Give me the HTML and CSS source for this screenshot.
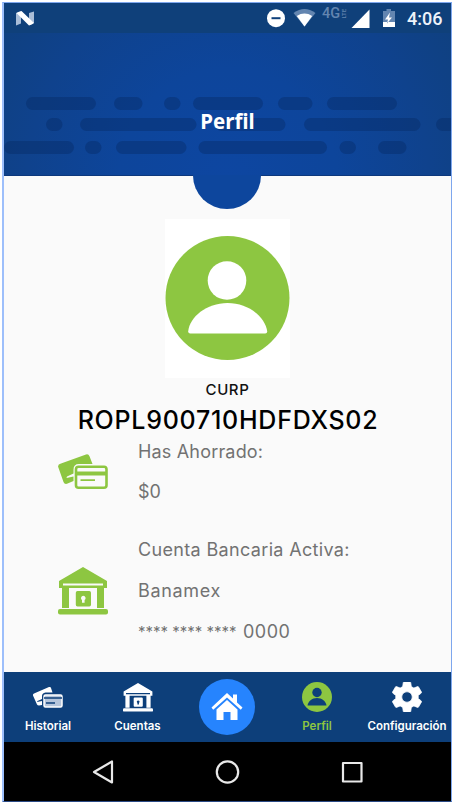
FILE: index.html
```
<!DOCTYPE html>
<html lang="es">
<head>
<meta charset="utf-8">
<title>Perfil</title>
<link rel="stylesheet" href="styles.css">
</head>
<body>
<svg class="symbols" aria-hidden="true">
  <symbol id="cards" viewBox="0 0 50 36">
    <path fill="currentColor" d="M3 9.500 28 .5q2.500-.8 3.500 1.700L34.500 10H21q-5.500 0-5.500 5.500v4L9 22.500l-.5 1.500 7-1.500V27L9 29.800q-2.500.7-3.500-1.800L.2 13q-.7-2.500 2.800-3.500Z"/>
    <rect x="18" y="12.700" width="30.500" height="21" rx="2.500" fill="none" stroke="currentColor" stroke-width="2.600"/>
    <path fill="currentColor" d="M18 17.500h31v4H18zM22.500 25.200H37v1.800H22.500z"/>
  </symbol>
  <symbol id="bank" viewBox="0 0 50 48">
    <path fill="currentColor" fill-rule="evenodd" d="M25 0 49 14v7H1v-7ZM5 16.500v2h40v-2Z"/>
    <path fill="currentColor" d="M4 20h7v21H4zM39 20h7v21h-7z"/>
    <rect y="42" width="50" height="5.500" rx="2" fill="currentColor"/>
    <path fill="currentColor" fill-rule="evenodd" d="M19.500 24h11.800q1.700 0 1.700 1.700v12.100q0 1.700-1.700 1.700H19.500q-1.700 0-1.700-1.700V25.700q0-1.700 1.700-1.700Zm5.800 4.800a2.300 2.300 0 0 0-1.300 4.200v2.800h2.600V33a2.300 2.300 0 0 0-1.300-4.200Z"/>
  </symbol>
</svg>
<div class="phone">
  <header class="header">
    <svg class="pattern" viewBox="4 3 447 173" aria-hidden="true">
      <g>
        <rect x="26" y="97" width="70" height="13" rx="6.500"/><rect x="114" y="97" width="28.500" height="13" rx="6.500"/><rect x="164" y="97" width="16.500" height="13" rx="6.500"/><rect x="193" y="97" width="70" height="13" rx="6.500"/><rect x="278" y="97" width="34.500" height="13" rx="6.500"/><rect x="327" y="97" width="70" height="13" rx="6.500"/>
        <rect x="46" y="118" width="16.500" height="13" rx="6.500"/><rect x="80" y="118" width="116.500" height="13" rx="6.500"/><rect x="215" y="118" width="70.500" height="13" rx="6.500"/><rect x="304" y="118" width="116.500" height="13" rx="6.500"/><rect x="436" y="118" width="30" height="13" rx="6.500"/>
        <rect x="4" y="141" width="70" height="13" rx="6.500"/><rect x="85" y="141" width="16.500" height="13" rx="6.500"/><rect x="116" y="141" width="70.500" height="13" rx="6.500"/><rect x="198.500" y="141" width="128.500" height="13" rx="6.500"/><rect x="339.500" y="141" width="16.500" height="13" rx="6.500"/><rect x="378" y="141" width="28.500" height="13" rx="6.500"/>
      </g>
    </svg>
    <div class="status">
      <svg class="status-n" viewBox="0 0 19 15"><path fill="#a9bdd8" d="M0 2l5-1.500v12L0 14.500zM13 2l5-1.500V12l-5 2z"/><path fill="#fff" d="M.5 2Q3 .5 5.500 0L18 12q-2 1.500-5 2.500Z"/></svg>
      <svg class="status-icons" viewBox="264 6 134 25">
        <circle cx="276" cy="18.200" r="9" fill="#fff"/><path d="M271.500 18.200h9" stroke="#0f407b" stroke-width="2"/>
        <path fill="#6385b0" d="M293.500 13q11-8 22 0L304.500 26.500Z"/><path fill="#fff" d="M296.800 16q7.700-4.800 15.400 0L304.500 26.500Z"/>
        <text class="net" x="322" y="18">4G</text><text class="lte" transform="translate(346 18.500) rotate(-90)">LTE</text>
        <path fill="#fff" d="M369.500 9.500V28H351.500Z"/>
        <path fill="#6385b0" d="M386.500 9h4.500v2h4v12h-12V11h3.500z"/><path fill="#fff" d="M383 22h12v5h-12zM390 12.500l-5 7h3l-1 4 5-6h-3z"/>
      </svg>
      <span class="clock">4:06</span>
    </div>
    <h1 class="title">Perfil</h1>
    <div class="notch"></div>
  </header>
  <main class="content">
    <div class="avatar">
      <svg viewBox="0 0 124 124"><circle cx="62" cy="62" r="62" fill="#8dc641"/><circle cx="61.500" cy="44.500" r="19.300" fill="#fff"/><path fill="#fff" d="M22.700 95.500C24 81 41 67 62 67s38 14 39.700 28.500q0 2-2 2H24.700q-2 0-2-2Z"/></svg>
    </div>
    <div class="curp-label"><span>CURP</span></div>
    <div class="curp"><span>ROPL900710HDFDXS02</span></div>
    <section class="info saved">
      <svg class="cards"><use href="#cards"/></svg>
      <div class="lines"><p class="l1">Has Ahorrado:</p><p class="l2">$0</p></div>
    </section>
    <section class="info account">
      <svg class="bank"><use href="#bank"/></svg>
      <div class="lines"><p class="l3">Cuenta Bancaria Activa:</p><p class="l4">Banamex</p><p class="l5"><span class="stars">**** **** ****</span><span class="digits">0000</span></p></div>
    </section>
  </main>
  <nav class="tabs">
    <a class="tab"><svg class="i-cards" viewBox="0 0 30 21"><path fill="#fff" d="M1 6.500 16 0q1.500-.5 2 1l1.500 4.500h-7Q9 6 9 9v3l-4.500 2-.5 1 5-1v4l-3 .5q-1.500 0-2-1L0 8.500q-.3-1.300 1-2Z"/><rect x="11" y="8" width="18" height="12" rx="1.500" fill="#b5c5db" stroke="#fff" stroke-width="1.500"/><path d="M11 11h18M13 16h9" stroke="#0d3f7a" stroke-width="1.300"/></svg><span>Historial</span></a>
    <a class="tab"><svg class="i-bank"><use href="#bank"/></svg><span>Cuentas</span></a>
    <a class="home"><svg viewBox="0 0 32 28"><path fill="#fff" d="m16 0 6 5.500V1.500h4v8l5.500 5-1.700 2.200L16 4.500 2.200 16.700.5 14.500ZM16 7l10.500 9.500V27h-7v-8h-7v8h-7V16.500Z"/></svg></a>
    <a class="tab active"><svg class="i-user" viewBox="0 0 30 30"><circle cx="15" cy="15" r="15" fill="#8dc641"/><circle cx="15" cy="10.500" r="4.700" fill="#0d3f7a"/><path fill="#0d3f7a" d="M5.500 23.500c.5-4 4.500-7.500 9.500-7.500s9 3.500 9.500 7.500Z"/></svg><span>Perfil</span></a>
    <a class="tab"><svg class="i-gear" viewBox="2 2 20 20"><path fill="#fff" stroke="#fff" stroke-width=".5" d="M19.430 12.980c.040-.320.070-.640.070-.980s-.030-.660-.070-.980l2.110-1.650c.190-.150.240-.420.120-.640l-2-3.460c-.120-.220-.390-.300-.610-.220l-2.490 1c-.520-.400-1.080-.730-1.690-.980l-.380-2.650C14.460 2.180 14.250 2 14 2h-4c-.250 0-.460.180-.490.420l-.380 2.650c-.610.250-1.170.590-1.690.980l-2.490-1c-.230-.090-.490 0-.610.220l-2 3.460c-.130.220-.070.490.120.640l2.110 1.650c-.040.320-.070.650-.070.980s.030.660.070.980l-2.110 1.650c-.190.150-.240.420-.120.640l2 3.460c.120.220.390.300.610.220l2.490-1c.520.400 1.080.730 1.690.980l.380 2.650c.030.240.240.420.490.420h4c.250 0 .460-.180.490-.420l.380-2.650c.610-.250 1.170-.590 1.690-.980l2.490 1c.230.090.490 0 .610-.220l2-3.460c.120-.220.070-.490-.120-.640l-2.110-1.650zM12 15.500c-1.930 0-3.500-1.570-3.500-3.500s1.570-3.500 3.500-3.500 3.500 1.570 3.500 3.500-1.570 3.500-3.500 3.500z"/></svg><span>Configuración</span></a>
  </nav>
  <footer class="system">
    <svg viewBox="4 742 447 59"><g fill="none" stroke="#e8e8e8" stroke-width="2.200" stroke-linejoin="round"><path d="M94 772l18-10.500v21Z"/><circle cx="227.500" cy="772" r="10.700"/><rect x="343" y="763" width="18.500" height="18.500"/></g></svg>
  </footer>
</div>
</body>
</html>
```
FILE: styles.css
```
* { box-sizing: border-box; }
body { margin: 0; width: 452px; height: 802px; padding: 2px 0 0 2px; background: #fff; font-family: Inter, "Liberation Sans", sans-serif; overflow: hidden; }
svg { display: block; }
.symbols { position: absolute; width: 0; height: 0; }
.phone { width: 450px; height: 800px; border: 1px solid #7ea7ee; border-left: 2px solid #9dbffb; border-bottom-color: #2a4a86; display: flex; flex-direction: column; background: #fafafa; }
.header { position: relative; height: 173px; background: radial-gradient(circle 285px at 224px 174px, #0d46a1 0, #0d459b 38%, #0f428d 70%, #0f407d 100%); border-bottom: 1px solid #0d387c; }
.pattern { position: absolute; left: 0; top: 0; width: 447px; height: 173px; }
.pattern g { fill: #05265f; fill-opacity: .36; }
.status { position: relative; height: 30px; background: #0f407a; display: flex; align-items: flex-start; }
.status-n { width: 19px; height: 15px; margin: 8px 0 0 12px; }
.status-icons { width: 134px; height: 25px; margin: 3px 0 0 229px; }
.net { font: 500 14.500px Roboto, sans-serif; fill: #6385b0; }
.lte { font: 500 6px Roboto, sans-serif; fill: #6385b0; }
.clock { font: 500 18px/20px Roboto, sans-serif; color: #eef3fa; margin: 6px 0 0 9px; }
.title { position: relative; margin: 75px 0 0; text-align: center; font: 700 20.500px/26px "Noto Sans", sans-serif; color: #fff; }
.notch { position: absolute; left: 189px; top: 172px; width: 68px; height: 33.500px; background: #0d469d; border-radius: 0 0 34px 34px / 0 0 33.500px 33.500px; }
.content { height: 496px; }
.avatar { width: 125px; height: 159px; margin: 43px auto 0; padding-top: 17px; background: #fff; }
.avatar svg { width: 125px; height: 124px; }
.curp-label, .curp { text-align: center; color: #111; white-space: nowrap; font-weight: 500; }
.curp-label { font-size: 15px; line-height: 20px; margin-top: 2px; letter-spacing: .6px; }
.curp { font-size: 25px; line-height: 32px; margin-top: 4px; color: #000; letter-spacing: .750px; padding-left: 1px; }
.info { display: flex; padding-left: 54px; color: #727272; }
.info svg { width: 50px; flex: none; color: #8dc641; }
.info .cards { height: 36px; margin-top: 18px; }
.info .bank { height: 48px; margin-top: 33px; }
.lines { margin-left: 30px; padding-top: 1px; }
.lines p { margin: 0; height: 40px; font-size: 18px; line-height: 30px; white-space: nowrap; }
.lines .l1 { letter-spacing: .18px; }
.lines .l3 { letter-spacing: .34px; }
.lines .l4 { letter-spacing: .65px; }
.account { margin-top: 17px; }
.account .lines p { height: 41px; }
.l5 { display: flex; }
.stars { width: 105px; font-size: 15px; }
.digits { letter-spacing: .5px; }
.tabs { height: 70px; background: #0d3f7a; display: grid; grid-template-columns: 88px 91px 88px 92px 88px; }
.tab { display: flex; flex-direction: column; align-items: center; color: #fff; font-size: 11.500px; font-weight: 600; line-height: 14px; white-space: nowrap; }
.tab svg { flex: none; }
.tab span { margin-top: auto; margin-bottom: 9px; }
.i-cards { width: 30px; height: 21px; margin-top: 15px; }
.i-bank { width: 30px; height: 29px; margin-top: 11px; }
.i-user { width: 30px; height: 30px; margin-top: 10px; }
.i-gear { width: 30px; height: 30px; margin-top: 10px; }
.active { color: #8dc641; }
.home { width: 56px; height: 56px; margin: 7px auto 0; border-radius: 50%; background: #2684fe; display: grid; place-items: center; }
.home svg { width: 32px; height: 28px; }
.system { height: 59px; background: #000; }
.system svg { width: 447px; height: 59px; }
```
